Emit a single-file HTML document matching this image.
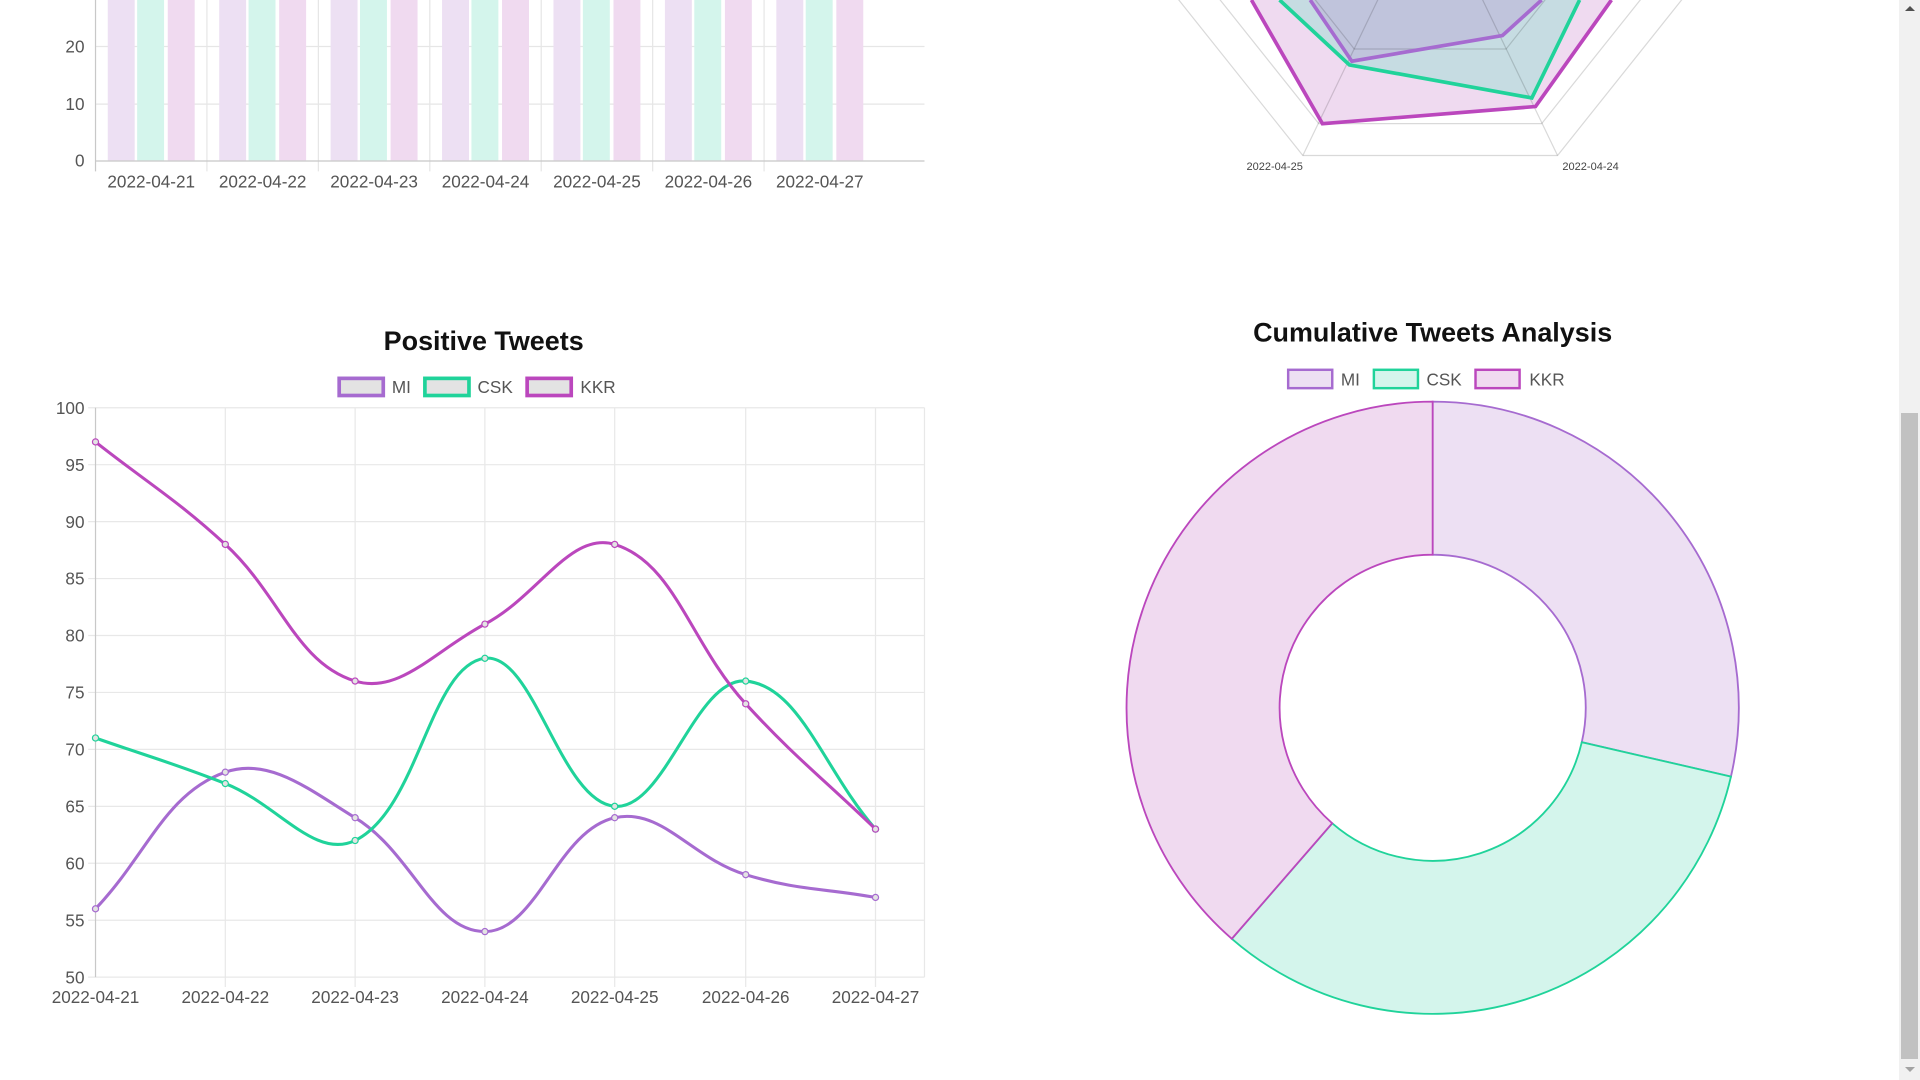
<!DOCTYPE html>
<html><head><meta charset="utf-8"><style>
html,body{margin:0;padding:0;background:#fff;overflow:hidden;width:1920px;height:1080px}
svg{position:absolute;left:0;top:0}
text{font-family:"Liberation Sans",Arial,sans-serif}
#sb{position:absolute;left:1899px;top:0;width:21px;height:1080px;background:#f1f1f1}
#th{position:absolute;left:1901px;top:413px;width:17px;height:646px;background:#c1c1c1}
.ar{position:absolute;left:1905px;width:0;height:0;border-left:5px solid transparent;border-right:5px solid transparent}
</style></head><body>
<svg width="1920" height="1080" viewBox="0 0 1568 882" xmlns="http://www.w3.org/2000/svg">
<g stroke="#e6e6e6" stroke-width="1">
<line x1="78" y1="38" x2="755" y2="38"/><line x1="78" y1="85" x2="755" y2="85"/>
<line x1="169" y1="0" x2="169" y2="140"/><line x1="260" y1="0" x2="260" y2="140"/><line x1="351" y1="0" x2="351" y2="140"/><line x1="442" y1="0" x2="442" y2="140"/><line x1="533" y1="0" x2="533" y2="140"/><line x1="624" y1="0" x2="624" y2="140"/>
</g>
<g id="bars"></g>
<line x1="78" y1="0" x2="78" y2="140" stroke="#c8c8c8"/>
<line x1="78" y1="131.5" x2="755" y2="131.5" stroke="#c8c8c8"/>
<g font-size="14" fill="#555" text-anchor="end"><text x="69" y="43">20</text><text x="69" y="90">10</text><text x="69" y="136">0</text></g>
<g font-size="14" fill="#555" text-anchor="middle">
<text x="123.5" y="153">2022-04-21</text><text x="214.5" y="153">2022-04-22</text><text x="305.5" y="153">2022-04-23</text><text x="396.5" y="153">2022-04-24</text><text x="487.5" y="153">2022-04-25</text><text x="578.5" y="153">2022-04-26</text><text x="669.5" y="153">2022-04-27</text></g>

<polygon points="1000,-60 1022,0 1080,101 1254,87 1316,0 1340,-60" fill="#efdaf0"/>
<polygon points="1020,-60 1045,0 1102,53 1251,80 1290,0 1310,-60" fill="#c6dce2"/>
<polygon points="1050,-60 1070,0 1104,50 1227,29 1259,0 1270,-60" fill="#c0c4dc"/>
<g stroke="rgba(0,0,0,0.15)" fill="none">
<polygon points="1168,-329 1355,-239 1402,-36 1272,127 1064,127 934,-36 981,-239"/>
<polygon points="1168,-299 1332,-220 1373,-42 1259,101 1077,101 963,-42 1004,-220"/>
<polygon points="1168,-232 1280,-178 1307,-57 1230,40 1106,40 1029,-57 1056,-178"/>
<line x1="1168" y1="-89" x2="1272" y2="127"/><line x1="1168" y1="-89" x2="1064" y2="127"/><line x1="1168" y1="-89" x2="1402" y2="-36"/><line x1="1168" y1="-89" x2="934" y2="-36"/>
</g>
<polyline points="1022,0 1080,101 1254,87 1316,0" fill="none" stroke="#bb47bd" stroke-width="3"/>
<polyline points="1045,0 1102,53 1251,80 1290,0" fill="none" stroke="#20d39a" stroke-width="3"/>
<polyline points="1070,0 1104,50 1227,29 1259,0" fill="none" stroke="#a66bd0" stroke-width="3"/>
<g font-size="9" fill="#444" text-anchor="middle"><text x="1041" y="139">2022-04-25</text><text x="1299" y="139">2022-04-24</text></g>

<text x="395" y="286" font-size="22" font-weight="bold" text-anchor="middle" fill="#111">Positive Tweets</text>
<g stroke-width="3"><rect x="277" y="309" width="36" height="14" fill="#e3e3e3" stroke="#a66bd0"/><rect x="347" y="309" width="36" height="14" fill="#e3e3e3" stroke="#20d39a"/><rect x="430.5" y="309" width="36" height="14" fill="#e3e3e3" stroke="#bb47bd"/></g>
<g font-size="14" fill="#555"><text x="320" y="321">MI</text><text x="390" y="321">CSK</text><text x="474" y="321">KKR</text></g>
<g id="lgrid" stroke="#e8e8e8"></g>
<line x1="78" y1="333" x2="78" y2="798" stroke="#c8c8c8"/>
<g id="lylab" font-size="14" fill="#555" text-anchor="end"></g>
<g font-size="14" fill="#555" text-anchor="middle">
<text x="78" y="819">2022-04-21</text><text x="184" y="819">2022-04-22</text><text x="290" y="819">2022-04-23</text><text x="396" y="819">2022-04-24</text><text x="502" y="819">2022-04-25</text><text x="609" y="819">2022-04-26</text><text x="715" y="819">2022-04-27</text></g>
<g id="lines"></g>

<text x="1170" y="279" font-size="22" font-weight="bold" text-anchor="middle" fill="#111">Cumulative Tweets Analysis</text>
<g stroke-width="2"><rect x="1052" y="302" width="36" height="15" fill="#ede0f3" stroke="#a66bd0"/><rect x="1122" y="302" width="36" height="15" fill="#d4f5ec" stroke="#20d39a"/><rect x="1205" y="302" width="36" height="15" fill="#f0daf0" stroke="#bb47bd"/></g>
<g font-size="14" fill="#555"><text x="1095" y="315">MI</text><text x="1165" y="315">CSK</text><text x="1249" y="315">KKR</text></g>
<g id="donut" stroke-width="1.5"></g>
</svg>
<div id="sb"></div><div id="th"></div>
<div class="ar" style="top:6px;border-bottom:5px solid #505050"></div>
<div class="ar" style="top:1067px;border-top:5px solid #a3a3a3"></div>
<script>
var NS="http://www.w3.org/2000/svg";
function el(p,t,a){var e=document.createElementNS(NS,t);for(var k in a)e.setAttribute(k,a[k]);p.appendChild(e);return e;}
var bg=document.getElementById('bars');
for(var i=0;i<7;i++){var x0=78+91*i;
el(bg,'rect',{x:x0+10,y:-5,width:22,height:136,fill:'#ede0f3'});
el(bg,'rect',{x:x0+34,y:-5,width:22,height:136,fill:'#d4f5ec'});
el(bg,'rect',{x:x0+59,y:-5,width:22,height:136,fill:'#f0daf0'});}
var lg=document.getElementById('lgrid'),yl=document.getElementById('lylab');
function Y(v){return 798-(v-50)*9.3;}
for(var v=50;v<=100;v+=5){el(lg,'line',{x1:72,y1:Y(v),x2:755,y2:Y(v)});var t=el(yl,'text',{x:69,y:Y(v)+5});t.textContent=v;}
var xs=[78,184,290,396,502,609,715];
xs.forEach(function(x){if(x>78)el(lg,'line',{x1:x,y1:333,x2:x,y2:806});});
el(lg,'line',{x1:755,y1:333,x2:755,y2:798});
var data=[['#a66bd0',[56,68,64,54,64,59,57]],['#20d39a',[71,67,62,78,65,76,63]],['#bb47bd',[97,88,76,81,88,74,63]]];
var lgp=document.getElementById('lines');
data.forEach(function(d){var P=d[1].map(function(v,i){return [xs[i],Y(v)];});var cps=[];
for(var i=0;i<P.length;i++){var p0=P[Math.max(0,i-1)],p1=P[i],p2=P[Math.min(P.length-1,i+1)];
var d01=Math.hypot(p1[0]-p0[0],p1[1]-p0[1]),d12=Math.hypot(p2[0]-p1[0],p2[1]-p1[1]);var s=d01+d12||1;
var fa=0.4*d01/s,fb=0.4*d12/s;cps.push([[p1[0]-fa*(p2[0]-p0[0]),p1[1]-fa*(p2[1]-p0[1])],[p1[0]+fb*(p2[0]-p0[0]),p1[1]+fb*(p2[1]-p0[1])]]);}
var s='M'+P[0][0]+','+P[0][1];for(var i=1;i<P.length;i++){s+=' C'+cps[i-1][1][0]+','+cps[i-1][1][1]+' '+cps[i][0][0]+','+cps[i][0][1]+' '+P[i][0]+','+P[i][1];}
el(lgp,'path',{d:s,fill:'none',stroke:d[0],'stroke-width':2.5});
P.forEach(function(p){el(lgp,'circle',{cx:p[0],cy:p[1],r:2.5,fill:'#e3e3e3',stroke:d[0],'stroke-width':1});});});
var dg=document.getElementById('donut'),cx=1170,cy=578,R=250,r=125;
function pt(a,rr){a=a*Math.PI/180;return [cx+rr*Math.sin(a),cy-rr*Math.cos(a)];}
[[0,103,'#ede0f3','#a66bd0'],[103,221,'#d4f5ec','#20d39a'],[221,360,'#f0daf0','#bb47bd']].forEach(function(s){
var a=pt(s[0],R),b=pt(s[1],R),c=pt(s[1],r),e=pt(s[0],r),l=(s[1]-s[0])>180?1:0;
el(dg,'path',{d:'M'+a+' A'+R+','+R+' 0 '+l+' 1 '+b+' L'+c+' A'+r+','+r+' 0 '+l+' 0 '+e+' Z',fill:s[2],stroke:s[3]});});
</script>
</body></html>
